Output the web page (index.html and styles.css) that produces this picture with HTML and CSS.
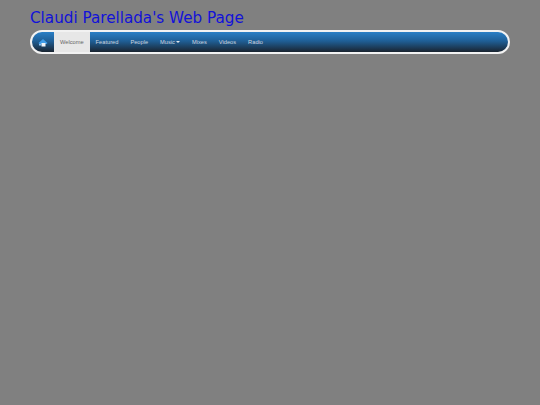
FILE: index.html
```html
<!DOCTYPE html>
<html lang="en">
<head>
  <meta charset="UTF-8">
  <title>Claudi Parellada's Web Page</title>
  <link rel="stylesheet" href="styles.css">
</head>
<body>
  <h1 class="site-title">Claudi Parellada's Web Page</h1>
  <nav class="navbar">
    <a class="nav-item nav-home" href="#">
      <svg class="home-icon" viewBox="0 0 10 10" width="10" height="10">
        <path d="M0.5 5 L5 1 L9.5 5 L8.5 6 H1.5 Z" fill="#3f9ce8"/>
        <path d="M3.5 5 H7.5 V8.5 H3.5 Z" fill="#eef3f8"/>
        <path d="M1 6 H3.5 V7.5 H1 Z" fill="#8fc2ee"/>
      </svg>
    </a>
    <a class="nav-item active" href="#">Welcome</a>
    <a class="nav-item" href="#">Featured</a>
    <a class="nav-item" href="#">People</a>
    <a class="nav-item" href="#">Music<span class="caret"></span></a>
    <a class="nav-item" href="#">Mixes</a>
    <a class="nav-item" href="#">Videos</a>
    <a class="nav-item" href="#">Radio</a>
  </nav>
</body>
</html>
```

FILE: styles.css
```css
body {
  margin: 0;
  padding: 9px 30px 0;
  background-color: #808080;
  font-family: "Liberation Sans", Arial, sans-serif;
}

.site-title {
  margin: 0 0 2px;
  height: 19px;
  font-family: "DejaVu Sans", Verdana, sans-serif;
  font-size: 15.2px;
  font-weight: normal;
  line-height: 19px;
  color: #1212d8;
}

.navbar {
  display: flex;
  height: 20px;
  border: 2px solid #f2f2f2;
  border-radius: 12px;
  overflow: hidden;
  background: linear-gradient(to bottom, #2a7fc6 0%, #1f5f96 45%, #1a2430 100%);
}

.nav-item {
  display: flex;
  align-items: center;
  padding: 0 6px;
  font-size: 5.7px;
  line-height: 20px;
  color: #cdd7e0;
  text-decoration: none;
}

.nav-home {
  width: 22px;
  padding: 2px 0 0 0;
  box-sizing: border-box;
  justify-content: center;
}

.active {
  background-color: #e7e7e7;
  color: #666666;
}

.caret {
  width: 0;
  height: 0;
  margin-left: 1px;
  border-top: 2px solid #dfe6ec;
  border-left: 2px solid transparent;
  border-right: 2px solid transparent;
}
```
